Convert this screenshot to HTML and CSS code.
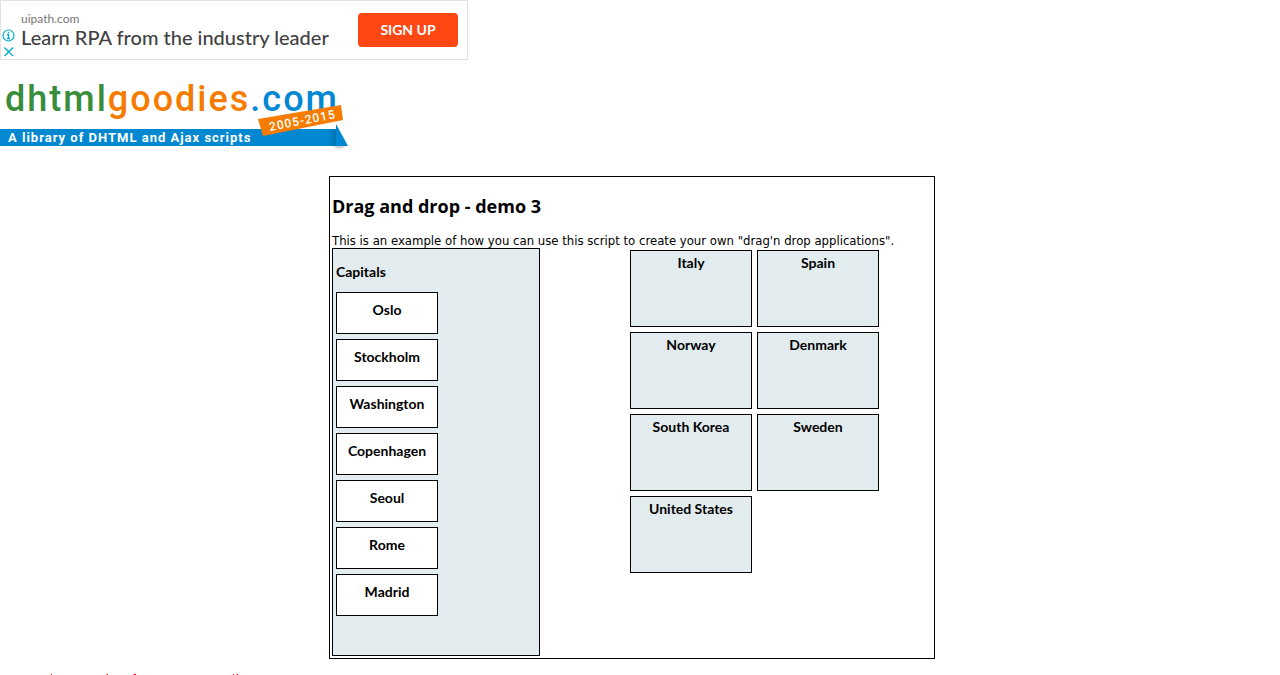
FILE: index.html
```html
<!DOCTYPE html>
<html lang="en">
<head>
<meta charset="utf-8">
<title>Drag and drop - demo 3</title>
<link rel="stylesheet" href="styles.css">
</head>
<body>
<aside class="ad">
  <div class="ad-marks">
    <svg width="14" height="14" viewBox="0 0 14 14" fill="none" stroke="#00aecd"><circle cx="7.5" cy="6.5" r="5.5" stroke-width="1.2"/><path d="M7.5 3v1.6M6 5.6h1.5v4M5.9 9.6h3.2" stroke-width="1.4"/></svg>
    <svg width="14" height="14" viewBox="0 0 14 14" fill="none" stroke="#00aecd" stroke-width="1.4"><path d="M3.5 2.5l8.5 8.5M12 2.5L3.5 11"/></svg>
  </div>
  <div class="ad-copy">
    <a class="ad-site" href="#">uipath.com</a>
    <a class="ad-title" href="#">Learn RPA from the industry leader</a>
  </div>
  <button class="ad-button" type="button">SIGN UP</button>
</aside>
<header>
  <a href="#" aria-label="dhtmlgoodies.com">
  <svg class="logo" width="350" height="75" viewBox="0 0 350 75">
    <defs>
      <linearGradient id="fold"><stop offset="0" stop-color="#0288d1"/><stop offset="1" stop-color="#0273b2"/></linearGradient>
      <filter id="soft"><feGaussianBlur stdDeviation="1.5"/></filter>
    </defs>
    <text class="logo-name" x="5" y="36"><tspan fill="#388e3c">dhtml</tspan><tspan fill="#f57c00">goodies</tspan><tspan fill="#0288d1">.com</tspan></text>
    <path d="M334 69h12l-4 4h-6z" fill="#bbb" filter="url(#soft)"/>
    <path d="M0 54H336V71H0z" fill="#0288d1"/>
    <path d="M328 54h8v17h-8z" fill="url(#fold)"/>
    <path d="M336 49L348 71H336z" fill="#0288d1"/>
    <text class="logo-tag" x="8" y="67">A library of DHTML and Ajax scripts</text>
    <path d="M258 44L341 30L343 45L263 61z" fill="#f57c00"/>
    <text class="logo-years" x="270" y="56" transform="rotate(-11 270 56)">2005-2015</text>
  </svg></a>
</header>
<main class="frame">
  <h1>Drag and drop - demo 3</h1>
  <p class="intro">This is an example of how you can use this script to create your own "drag'n drop applications".</p>
  <div class="columns">
    <section class="capitals">
      <h2>Capitals</h2>
      <div class="card">Oslo</div>
      <div class="card">Stockholm</div>
      <div class="card">Washington</div>
      <div class="card">Copenhagen</div>
      <div class="card">Seoul</div>
      <div class="card">Rome</div>
      <div class="card">Madrid</div>
    </section>
    <section class="countries">
      <div class="country">Italy</div>
      <div class="country">Spain</div>
      <div class="country">Norway</div>
      <div class="country">Denmark</div>
      <div class="country">South Korea</div>
      <div class="country">Sweden</div>
      <div class="country">United States</div>
    </section>
  </div>
</main>
<svg class="ticks" width="260" height="1" viewBox="0 0 260 1" fill="#f00" aria-hidden="true"><path d="M51 0h1v1h-1zM107 0h1v1h-1zM134 0h2v1h-2zM233 0h1v1h-1zM237 0h1v1h-1z"/><path d="M106 0h1v1h-1zM133 0h1v1h-1zM236 0h1v1h-1z" opacity=".4"/></svg>
</body>
</html>
```
FILE: styles.css
```css
body {
  margin: 0 16px 0 0;
  background: #fff;
  color: #000;
  font: 14px/15px Lato, sans-serif;
}
.ad {
  box-sizing: border-box;
  max-width: 468px;
  height: 60px;
  display: flex;
  align-items: center;
  border: 1px solid #e2e2e2;
  padding-right: 9px;
}
.ad-marks { display: flex; flex-direction: column; gap: 2px; width: 20px; margin-top: 28px; }
.ad-copy { display: flex; flex-direction: column; flex: 1; padding-bottom: 3px; }
.ad-copy a { text-decoration: none; white-space: nowrap; }
.ad-site { color: #757575; font-size: 12px; line-height: 16px; }
.ad-title { color: #424242; font-size: 20px; line-height: 20px; font-weight: 500; }
.ad-button {
  width: 100px;
  height: 34px;
  border: 0;
  border-radius: 4px;
  background: #ff4713;
  color: #fff;
  font: bold 14px/20px Lato, sans-serif;
}
.logo { display: block; margin-top: 15px; overflow: visible; }
.logo text { font-family: Roboto, sans-serif; font-weight: 500; }
.logo-name { font-size: 36px; letter-spacing: 2px; }
.logo .logo-tag { fill: #fff; font-size: 13px; font-weight: 700; letter-spacing: 1px; }
.logo-years { fill: #fff; font-size: 12px; letter-spacing: 1px; }
.frame {
  max-width: 600px;
  margin: 26px auto 15px;
  border: 1px solid #000;
  padding: 2px;
}
h1 { margin: 16px 0; font: bold 18px/23px "Open Sans", sans-serif; }
.intro { margin: 0; font: 13px/14px "DejaVu Sans Condensed", sans-serif; }
.columns { display: flex; justify-content: space-between; }
.capitals {
  box-sizing: border-box;
  width: 208px;
  border: 1px solid #000;
  padding: 0 3px 34px;
  background: #e2ebed;
}
h2 { margin: 15px 0 13px; font-size: 14px; line-height: 15px; }
.card {
  box-sizing: border-box;
  width: 102px;
  border: 1px solid #000;
  padding: 9px 0 16px;
  margin-bottom: 5px;
  background: #fff;
  text-align: center;
  font-weight: bold;
}
.countries {
  display: grid;
  grid-template-columns: 122px 122px;
  gap: 5px;
  align-content: start;
  width: 302px;
  padding-top: 2px;
}
.country {
  box-sizing: border-box;
  min-height: 77px;
  border: 1px solid #000;
  padding-top: 4px;
  background: #e2ebed;
  text-align: center;
  font-weight: bold;
}
.ticks { display: block; }
```
